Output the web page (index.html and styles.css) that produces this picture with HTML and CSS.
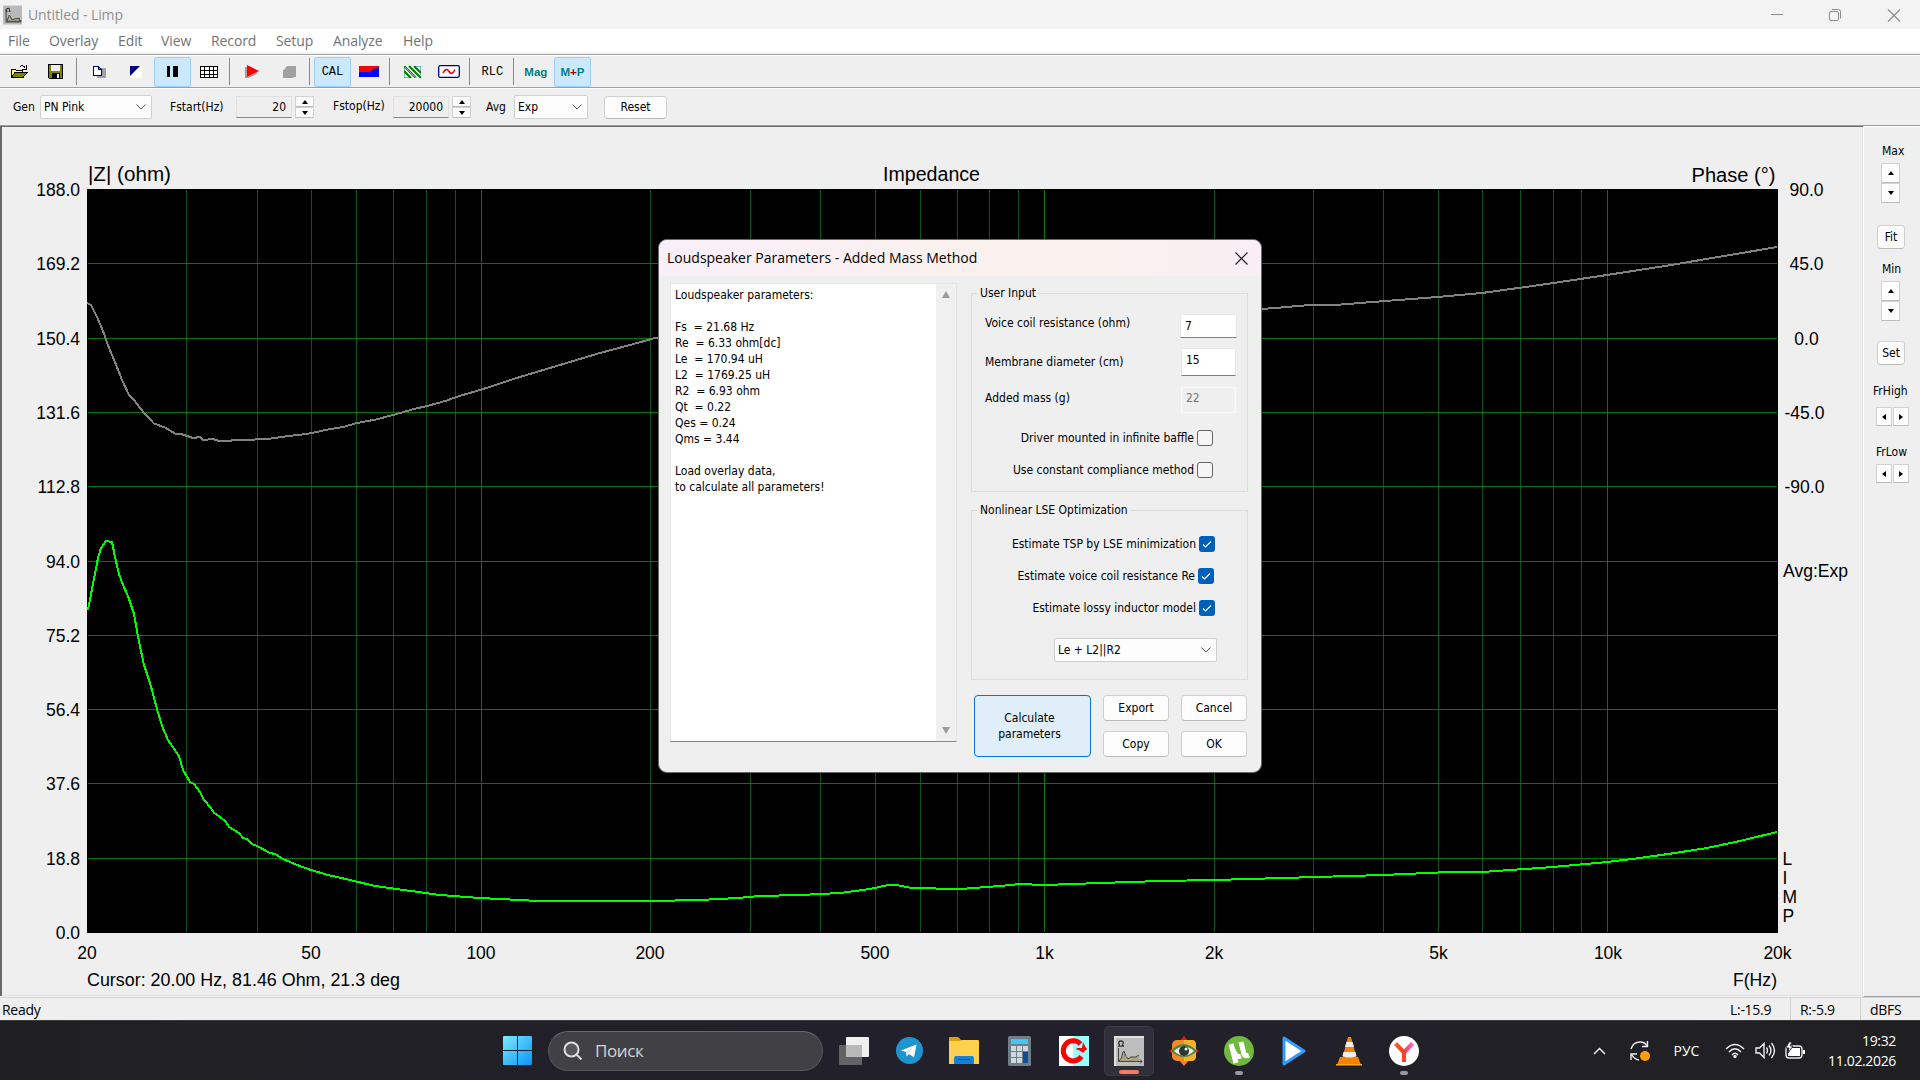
FILE: index.html
```html
<!DOCTYPE html>
<html lang="en">
<head>
<meta charset="utf-8">
<title>Untitled - Limp</title>
<link rel="stylesheet" href="styles.css">
</head>
<body>
<div class="desktop">
  <header class="titlebar">
    <svg class="app-icon" width="19" height="20" viewBox="0 0 30 30"><rect width="30" height="30" fill="#b9b9b9"/><path d="M5 5v21h23M28 26v-3" stroke="#555" fill="none" stroke-width="2"/><path d="M6 25l4-10 4 7 12-2v5z" fill="#aaa58e" stroke="#444" stroke-width="1.5"/><path d="M4 9h2c-2-6 6-6 4 0h2" fill="none" stroke="#333" stroke-width="1.6"/></svg>
    <span class="title-text">Untitled - Limp</span>
    <svg class="win-controls" width="134" height="14" viewBox="0 0 134 14" fill="none" stroke="#8b8b8b"><path d="M0 6.5h12"/><rect x="58.500" y="3.500" width="9" height="9" rx="1.500"/><path d="M61 1.500h6.500q2 0 2 2v7"/><path d="M117 1.500l12 12M129 1.500l-12 12" stroke-width="1.200"/></svg>
  </header>
  <nav class="menubar"><span>File</span><span>Overlay</span><span>Edit</span><span>View</span><span>Record</span><span>Setup</span><span>Analyze</span><span>Help</span></nav>
  <div class="toolbar">
    <span class="tool"><svg width="18" height="16" viewBox="0 0 18 16" shape-rendering="crispEdges"><path d="M1 13V5h4l1 1h6v3" fill="#ff6" stroke="#000"/><path d="M1.500 13.500L5 8.500h12l-4 5z" fill="#808000" stroke="#000"/><path d="M10 3q3-3 5 1M16 1v4h-4" fill="none" stroke="#000"/></svg></span>
    <span class="tool"><svg width="15" height="15" viewBox="0 0 15 15" shape-rendering="crispEdges"><path d="M.500.500h14v14h-13l-1-1z" fill="#808000" stroke="#000"/><path d="M3 1h9v6H3z" fill="#efefef"/><path d="M4 9h8v5H4z" fill="#000"/><path d="M9 10h2v4H9z" fill="#efefef"/></svg></span>
    <i class="sep"></i>
    <span class="tool"><svg width="15" height="14" viewBox="0 0 15 14" shape-rendering="crispEdges"><path d="M7 3h7v10H5v-2h2z" fill="#a0a0a0"/><path d="M1.500 1.500h5l3 3v6h-8zM6.500 1.500v3h3" fill="#fff" stroke="#000080" stroke-width="1.300"/></svg></span>
    <span class="tool"><svg width="12" height="12" viewBox="0 0 12 12"><path d="M0 0h12v12H0z" fill="#fff"/><path d="M0 0h10L0 10z" fill="#000080"/></svg></span>
    <span class="tool on"><svg width="11" height="11" viewBox="0 0 11 11"><path d="M0 0h3v11H0zM6 0h5v11H6z"/></svg></span>
    <span class="tool"><svg width="18" height="12" viewBox="0 0 18 12" fill="none" stroke="#000" shape-rendering="crispEdges"><path fill="#fff" d="M.500.500h17v11H.500z"/><path d="M0 4.500h18M0 8.500h18M4.500 0v12M9.500 0v12M13.500 0v12"/></svg></span>
    <i class="sep"></i>
    <span class="tool"><svg width="15" height="13" viewBox="0 0 15 13"><path d="M0 2h2v10l10-5v2L3 13H0z" fill="#a0a0a0"/><path d="M2 0l12 6L2 12z" fill="#f00"/></svg></span>
    <span class="tool"><svg width="13" height="12" viewBox="0 0 13 12"><path d="M4 0h9v11h-2l-1 1H0V4h1z" fill="#a0a0a0"/></svg></span>
    <i class="sep"></i>
    <span class="tool on pix">CAL</span>
    <span class="tool"><svg width="20" height="11" viewBox="0 0 20 11"><path d="M0 0h20v11H0z" fill="#00f"/><path d="M0 0h20v1l-7 3-2 2H0z" fill="#f00"/></svg></span>
    <i class="sep"></i>
    <span class="tool"><svg width="17" height="12" viewBox="0 0 17 12"><path d="M0 0h17v12H0z" fill="#fff"/><path d="M0 0v12h7M10 0h7v9" stroke="#008080" fill="none"/><path d="M0 0l12 12M5 0l12 12M0 5l7 7M10 0l7 7" stroke="#008000" stroke-width="2.200"/><path d="M1 1l11 11" stroke="#a0a0a0"/></svg></span>
    <span class="tool"><svg width="22" height="13" viewBox="0 0 22 13" fill="none"><rect x=".700" y=".700" width="20.600" height="11.600" rx="1.500" fill="#fff" stroke="#000080" stroke-width="1.300"/><path d="M5 8q3-6 6-1.500t6-2" stroke="#f00" stroke-width="1.600"/></svg></span>
    <i class="sep"></i>
    <span class="tool pix">RLC</span>
    <i class="sep"></i>
    <span class="tool mag">Mag</span>
    <span class="tool on mag">M<b>+</b>P</span>
  </div>
  <div class="genbar">
    <label class="w-gen">Gen</label>
    <span class="combo w-src">PN Pink<svg width="10" height="6" viewBox="0 0 10 6"><path d="M.500.500L5 5 9.500.500" fill="none" stroke="#555"/></svg></span>
    <label class="w-fstart">Fstart(Hz)</label>
    <span class="num">20</span><span class="spin"><i class="up"></i><i class="down"></i></span>
    <label class="w-fstop">Fstop(Hz)</label>
    <span class="num">20000</span><span class="spin"><i class="up"></i><i class="down"></i></span>
    <label class="w-avg">Avg</label>
    <span class="combo w-exp">Exp<svg width="10" height="6" viewBox="0 0 10 6"><path d="M.500.500L5 5 9.500.500" fill="none" stroke="#555"/></svg></span>
    <span class="btn w-reset">Reset</span>
  </div>
  <main class="work">
    <svg class="chart" width="1863" height="870" viewBox="0 127 1863 870">
      <rect x="87" y="190" width="1691" height="744" fill="#000"/>
      <g fill="none" stroke-width="1" shape-rendering="crispEdges">
        <path stroke="#0b5320" d="M186.500 191v742M257.500 191v742M311.500 191v742M356.500 191v742M393.500 191v742M426.500 191v742M455.500 191v742M650.500 191v742M750.500 191v742M820.500 191v742M875.500 191v742M920.500 191v742M957.500 191v742M989.500 191v742M1018.500 191v742M1214.500 191v742M1313.500 191v742M1383.500 191v742M1438.500 191v742M1482.500 191v742M1520.500 191v742M1553.500 191v742M1581.500 191v742"/>
        <path stroke="#007a00" d="M481.500 191v742M1044.500 191v742M1607.500 191v742M88 264.500h1689M88 339.500h1689M88 413.500h1689M88 487.500h1689M88 562.500h1689M88 636.500h1689M88 710.500h1689M88 784.500h1689M88 859.500h1689"/>
      </g>
      <g fill="none" stroke-width="2" shape-rendering="crispEdges">
        <polyline stroke="#828282" points="87,304 91,306 97,318 103,332 109,349 115,363 122,381 129,396 134,401 144,414 154,424.5 165,428.5 175,434.5 181,435 193,439 200,438 203,441 213,440 219,442 229,442 234,441 250,441 260,440 268,440 285,437.5 302,435.5 312,434 328,430.5 343,428 357,424 376,420.5 393,416 414,410 427,407 447,401.5 456,398 480,391 520,378 560,366 600,354 630,346 655,339 700,332 1200,313 1262,310 1275,309 1310,306 1335,306 1385,302 1438,298 1482,294 1540,286 1607,276 1665,267 1730,256 1777,248"/>
        <polyline stroke="#00ff00" points="88,611 92,590 98,559 101,549 106,542 112,543 115,558 119,575 123,586 128,597 134,615 139,643 144,666 150,684 157,710 162,727 168,741 179,757 183,771 190,783 194,785 200,793 204,801 211,809 214,814 219,817 226,823 229,828 239,834 243,839 247,840 252,845 257,847 270,854 275,855 283,860 297,866 311,871 328,876 350,881 375,887 400,890.5 440,896 480,899 500,900 539,902 650,902 700,901 738,899 759,897 800,896 840,894 870,890 888,886 896,886 912,889 960,890 1000,887 1020,885 1044,886 1100,884 1160,882 1214,881 1316,878 1383,876 1438,873.5 1482,873 1553,868 1607,863 1640,859 1675,854 1707,849 1740,842 1777,833"/>
      </g>
      <g class="head">
        <text x="88" y="181.500" textLength="83" lengthAdjust="spacingAndGlyphs">|Z| (ohm)</text>
        <text x="883" y="181.500" textLength="97" lengthAdjust="spacingAndGlyphs">Impedance</text>
        <text x="1691.500" y="182.500" textLength="84" lengthAdjust="spacingAndGlyphs">Phase (°)</text>
      </g>
      <g class="axis end">
        <text x="80" y="197">188.0</text><text x="80" y="271">169.2</text><text x="80" y="346">150.4</text><text x="80" y="420">131.6</text><text x="80" y="494">112.8</text><text x="80" y="569">94.0</text><text x="80" y="643">75.2</text><text x="80" y="717">56.4</text><text x="80" y="791">37.6</text><text x="80" y="866">18.8</text><text x="80" y="940">0.0</text>
      </g>
      <g class="axis mid">
        <text x="1806.500" y="197">90.0</text><text x="1806.500" y="271">45.0</text><text x="1806.500" y="346">0.0</text><text x="1804.500" y="420">-45.0</text><text x="1804.500" y="494">-90.0</text>
        <text x="87" y="960">20</text><text x="311" y="960">50</text><text x="481" y="960">100</text><text x="650" y="960">200</text><text x="875" y="960">500</text><text x="1044.500" y="960">1k</text><text x="1214" y="960">2k</text><text x="1438.500" y="960">5k</text><text x="1608" y="960">10k</text><text x="1777.500" y="960">20k</text>
      </g>
      <g class="axis">
        <text x="87" y="987" textLength="313" lengthAdjust="spacingAndGlyphs">Cursor: 20.00 Hz, 81.46 Ohm, 21.3 deg</text>
        <text x="1733" y="987" textLength="44" lengthAdjust="spacingAndGlyphs">F(Hz)</text>
        <text x="1783" y="578" textLength="65" lengthAdjust="spacingAndGlyphs">Avg:Exp</text>
        <text x="1782.500" y="866">L</text><text x="1782.500" y="885">I</text><text x="1782.500" y="904">M</text><text x="1782.500" y="923">P</text>
      </g>
    </svg>
    <aside class="side">
      <label class="s-max">Max</label>
      <span class="vspin"><i class="up"></i><i class="down"></i></span>
      <span class="btn s-fit">Fit</span>
      <label class="s-min">Min</label>
      <span class="vspin"><i class="up"></i><i class="down"></i></span>
      <span class="btn s-set">Set</span>
      <label class="s-fh">FrHigh</label>
      <span class="hspin"><i class="left"></i><i class="right"></i></span>
      <label class="s-fl">FrLow</label>
      <span class="hspin"><i class="left"></i><i class="right"></i></span>
    </aside>
  </main>
  <footer class="status"><span class="ready">Ready</span><span class="lev">L:-15.9</span><span class="rev">R:-5.9</span><span class="dbfs">dBFS</span></footer>

  <div class="taskbar">
    <svg class="start" width="29" height="29" viewBox="0 0 29 29"><defs><linearGradient id="win" x1="0" y1="0" x2="1" y2="1"><stop offset="0" stop-color="#7deaff"/><stop offset="1" stop-color="#0a93f8"/></linearGradient></defs><path fill="url(#win)" d="M1 0h13v14H0V1q0-1 1-1zM15 0h13q1 0 1 1v13H15zM0 15h14v14H1q-1 0-1-1zM15 15h14v13q0 1-1 1H15z"/></svg>
    <div class="search"><svg width="20" height="20" viewBox="0 0 20 20" fill="#58575c" stroke="#ddd" stroke-width="2"><circle cx="8.500" cy="8.500" r="7"/><path d="M13.500 13.500l5 5"/></svg><span>Поиск</span></div>
    <div class="apps">
      <span class="app"><svg width="30" height="28" viewBox="0 0 30 28"><rect x="0" y="8" width="23" height="20" rx="1" fill="#636363"/><rect x="7" y="0" width="23" height="20" rx="1" fill="#f0f0f0"/><path d="M7 8h16v12H7z" fill="#b9b9b9"/></svg></span>
      <span class="app"><svg width="27" height="27" viewBox="0 0 27 27"><circle cx="13.500" cy="13.500" r="13.500" fill="#1f95d0"/><path d="M5 13.500L20.500 7.500 18 20.500l-5-3.500-2.500 2.500-.500-4.500z" fill="#fff"/><path d="M10 15l7-5-5.500 6.500z" fill="#bcdcee"/></svg></span>
      <span class="app"><svg width="30" height="27" viewBox="0 0 30 27"><path d="M0 1q0-1 1-1h8l4 4h15q1 0 1 1v8H0z" fill="#e0a008"/><path d="M0 4h10l3-1h16q1 0 1 1v23H0z" fill="#ffd04d"/><path d="M5 27v-6q0-2 2-2h16q2 0 2 2v6z" fill="#1482d6"/><path d="M9 22.500h12" stroke="#075293"/></svg></span>
      <span class="app"><svg width="23" height="30" viewBox="0 0 23 30"><rect width="23" height="30" rx="1.500" fill="#6f7f89"/><path d="M3 3h17v5H3z" fill="#45c4f5"/><path d="M3 10h5v5H3zM9 10h5v5H9zM15 10h5v5h-5zM3 16h5v5H3zM9 16h5v5H9zM3 22h5v5H3zM9 22h5v5H9z" fill="#d0d8dd"/><path d="M15 16h5v11h-5z" fill="#114e96"/></svg></span>
      <span class="app"><svg width="30" height="30" viewBox="0 0 30 30"><path d="M0 0h30v30H0z" fill="#fff"/><path d="M14 0h16v30H14z" fill="#98ffff"/><path d="M22.500 20.500A10 10 0 1 1 21.500 8" fill="none" stroke="#f00" stroke-width="5"/><path d="M16 14h12l-4-8-1 6z" fill="#f00"/><path d="M17 12h11l-4 5z" fill="#f00"/></svg></span>
      <span class="app active"><svg width="30" height="30" viewBox="0 0 30 30"><path d="M0 0h30v30H0z" fill="#e4e3da"/><path d="M2 2h28v28H2z" fill="#bdbdbd"/><path d="M4.500 12v13.500H28M26 23.500l2 2-2 2" stroke="#454545" fill="none"/><path d="M5 25q3-2 4-9l1-1q2 7 4 8 3-3 5-2t6-2v6z" fill="#aaa486"/><path d="M5 25q3-2 4-9l1-1q2 7 4 8 3-3 5-2t6-2" fill="none" stroke="#454545"/><path d="M4 10h2q-3-5 1-5t1 5h2" fill="none" stroke="#333" stroke-width="1.300"/></svg><i class="bar"></i></span>
      <span class="app"><svg width="30" height="30" viewBox="0 0 30 30"><path d="M15 0l5 6H10zM0 15l6-5v10zM30 15l-6-5v10z" fill="#c7221d"/><path d="M15 30l6-7H9z" fill="#ff7a35"/><rect x="3" y="4" width="24" height="21" rx="5" fill="#ef8a25"/><path d="M15 4h8q4 0 4 5v11q0 5-4 5h-8z" fill="#f2b324"/><path d="M2 15q12-14 26 0-13 12-26 0z" fill="#508348"/><path d="M5 15q10-9 20 0-10 9-20 0z" fill="#f2eee4"/><circle cx="15" cy="15" r="5" fill="#27382f"/><circle cx="17" cy="13" r="1.500" fill="#fff"/></svg></span>
      <span class="app"><svg width="30" height="30" viewBox="0 0 30 30"><circle cx="15" cy="15" r="15" fill="#70b83e"/><path d="M7 8l5 19M9 14q3 8 8 6M17 6l3 12q1 3 5 1" stroke="#fff" stroke-width="5" fill="none"/></svg><i class="dot"></i></span>
      <span class="app"><svg width="24" height="30" viewBox="0 0 24 30"><path d="M2 2l20 13L2 28z" fill="#fff" stroke="#2f9cfb" stroke-width="3" stroke-linejoin="round"/></svg></span>
      <span class="app"><svg width="26" height="30" viewBox="0 0 26 30"><path d="M4 21h18l3 8H1z" fill="#f58206"/><path d="M12 1h3l6 22q-8 4-15 0z" fill="#f58206"/><path d="M10.500 6h6l1.500 5H9zM7.500 16h12l1 4q-7 3-14 0z" fill="#eee"/><path d="M0 28h26v1.500H0z" fill="#ffa62b"/></svg></span>
      <span class="app"><svg width="30" height="30" viewBox="0 0 30 30"><defs><linearGradient id="ya" x1="0" y1="0" x2="1" y2="0"><stop offset="0" stop-color="#ff5a22"/><stop offset=".500" stop-color="#f5402c"/><stop offset="1" stop-color="#ff5fe0"/></linearGradient></defs><circle cx="15" cy="15" r="15" fill="#fff"/><path d="M6.500 7.500l8.500 9 8.500-9M15 16v10" fill="none" stroke="url(#ya)" stroke-width="4.200"/></svg><i class="dot"></i></span>
    </div>
    <div class="tray">
      <svg class="t-chev" width="13" height="8" viewBox="0 0 13 8"><path d="M1 7l5.500-5.500L12 7" fill="none" stroke="#eee" stroke-width="1.500"/></svg>
      <svg class="t-sync" width="22" height="22" viewBox="0 0 22 22"><path d="M2 9q2-7 9-7 5 0 7 4M18.500 1v5.500H13M19 13M2 20v-6h6M3 15q2 4 7 5" fill="none" stroke="#eee" stroke-width="1.400"/><circle cx="16" cy="16" r="5" fill="#ff9d0a"/></svg>
      <span class="t-lang">РУС</span>
      <svg class="t-wifi" width="20" height="16" viewBox="0 0 20 16" fill="none" stroke="#eee" stroke-width="1.500"><path d="M1 6q9-9 18 0M4 9q6-6.500 12 0M7 12q3-3.500 6 0"/><circle cx="10" cy="13.500" r="1" fill="#eee"/></svg>
      <svg class="t-snd" width="21" height="17" viewBox="0 0 21 17" fill="none" stroke="#eee" stroke-width="1.400"><path d="M1 6h3.500L9 1.500v14L4.500 11H1zM11.500 5.500q2 3 0 6M14 3.500q4 5 0 10M16.500 1q6 7.500 0 15"/></svg>
      <svg class="t-bat" width="20" height="17" viewBox="0 0 20 17"><rect x="1" y="4" width="16" height="12" rx="3" fill="none" stroke="#eee" stroke-width="1.400"/><path d="M7 6h8v8H3v-3zM18 8h2v4h-2z" fill="#fff"/><path d="M4 0L1 6h3l-1 5 5-7H5l2-4z" fill="#fff" stroke="#202022" stroke-width=".800"/></svg>
      <div class="clock"><span class="time">19:32</span><span class="date">11.02.2026</span></div>
    </div>
  </div>

  <section class="dialog">
    <header class="dlg-title"><span>Loudspeaker Parameters - Added Mass Method</span><svg width="13" height="13" viewBox="0 0 13 13"><path d="M.500.500l12 12M12.500.500l-12 12" stroke="#222" stroke-width="1.200"/></svg></header>
    <div class="dlg-body">
      <div class="report"><pre>Loudspeaker parameters:

Fs  = 21.68 Hz
Re  = 6.33 ohm[dc]
Le  = 170.94 uH
L2  = 1769.25 uH
R2  = 6.93 ohm
Qt  = 0.22
Qes = 0.24
Qms = 3.44

Load overlay data,
to calculate all parameters!</pre><div class="scroll"><i></i><i class="flip"></i></div></div>
      <div class="controls">
        <div class="group g1"><span class="legend">User Input</span>
          <div class="row r1"><span>Voice coil resistance (ohm)</span><span class="field f1">7</span></div>
          <div class="row r2"><span>Membrane diameter (cm)</span><span class="field f2">15</span></div>
          <div class="row r3"><span>Added mass (g)</span><span class="field f3">22</span></div>
          <div class="check c1"><span>Driver mounted in infinite baffle</span><i class="box"></i></div>
          <div class="check c2"><span>Use constant compliance method</span><i class="box"></i></div>
        </div>
        <div class="group g2"><span class="legend">Nonlinear LSE Optimization</span>
          <div class="check c3"><span>Estimate TSP by LSE minimization</span><i class="box ticked"><svg width="16" height="16" viewBox="0 0 16 16"><path d="M4 8.500l2.500 2.500L12 5.500" fill="none" stroke="#fff" stroke-width="1.100"/></svg></i></div>
          <div class="check c4"><span>Estimate voice coil resistance Re</span><i class="box ticked"><svg width="16" height="16" viewBox="0 0 16 16"><path d="M4 8.500l2.500 2.500L12 5.500" fill="none" stroke="#fff" stroke-width="1.100"/></svg></i></div>
          <div class="check c5"><span>Estimate lossy inductor model</span><i class="box ticked"><svg width="16" height="16" viewBox="0 0 16 16"><path d="M4 8.500l2.500 2.500L12 5.500" fill="none" stroke="#fff" stroke-width="1.100"/></svg></i></div>
          <span class="combo model">Le + L2||R2<svg width="10" height="6" viewBox="0 0 10 6"><path d="M.500.500L5 5 9.500.500" fill="none" stroke="#555"/></svg></span>
        </div>
        <div class="buttons">
          <span class="btn calc">Calculate<br>parameters</span>
          <span class="btn">Export</span><span class="btn">Cancel</span>
          <span class="btn">Copy</span><span class="btn">OK</span>
        </div>
      </div>
    </div>
  </section>
</div>
</body>
</html>
```
FILE: styles.css
```css
* { box-sizing: border-box; }
body { margin: 0; background: #efefef; overflow: hidden; }
.desktop {
  position: relative; width: 1920px; height: 1080px; display: flex; flex-direction: column;
  background: #efefef; color: #000; white-space: nowrap;
  font: 12px/16px "DejaVu Sans Condensed", "DejaVu Sans", sans-serif; font-stretch: condensed;
}
svg { display: block; flex: none; }
i { display: block; }

.titlebar { height: 29px; background: #f3f3f3; display: flex; align-items: center; padding-left: 3px; color: #8f8f8f; font: 14px/20px "Open Sans", "Noto Sans", sans-serif; }
.title-text { margin-left: 6px; letter-spacing: -0.1px; flex: 1; }
.win-controls { margin-right: 15px; }
.menubar { height: 25px; background: #fff; border-bottom: 2px solid #f3f3f3; display: grid; grid-template-columns: 41px 69px 43px 50px 65px 57px 70px 60px; padding-left: 8px; color: #727272; font: 14px/24px "Open Sans", "Noto Sans", sans-serif; letter-spacing: -0.1px; }
.toolbar { height: 33px; border-top: 1px solid #a0a0a0; box-shadow: inset 0 1px #fff; display: flex; align-items: center; padding: 1px 0 0 1px; }
.tool { width: 36.6px; height: 30px; display: flex; align-items: center; justify-content: center; }
.tool.on { background: #cce8ff; border: 1px solid #99d1ff; border-radius: 2px; }
.sep { width: 1px; height: 27px; background: #8a8a8a; margin: 0 3.8px 0 2px; }
.pix { font: 12px/14px "Liberation Mono", monospace; letter-spacing: 0; }
.mag { font-family: "Liberation Sans", sans-serif; font-weight: bold; font-size: 11.5px; color: #008080; }
.mag b { color: #a00000; }

.genbar { height: 38px; border-top: 1px solid #a0a0a0; box-shadow: inset 0 1px #fff; display: flex; align-items: center; padding: 1px 0 0 13px; }
.w-gen { width: 27px; }
.combo { height: 24px; background: #fdfdfd; border: 1px solid #d0d0d0; border-radius: 2px; display: flex; align-items: center; justify-content: space-between; padding: 0 5px 0 3px; }
.w-src { width: 112px; }
.w-fstart { width: 66px; margin-left: 18px; }
.num { width: 56px; height: 22px; border: 1px solid #e2e2e2; border-bottom-color: #868686; text-align: right; padding: 2px 5px 0 0; font-size: 12px; }
.spin { width: 19px; height: 22px; margin-left: 3px; }
.spin i, .vspin i { display: flex; height: 50%; background: #fdfdfd; border: 1px solid #d2d2d2; border-bottom-color: #bcbcbc; align-items: center; justify-content: center; }
.up::before, .down::before { content: ""; border: 3.5px solid transparent; border-top: 0; border-bottom: 4px solid #000; }
.down::before { border-bottom: 0; border-top: 4px solid #000; }
.w-fstop { width: 60px; margin: -2px 0 0 19px; }
.w-avg { width: 28px; margin-left: 15px; }
.w-exp { width: 74px; }
.btn { background: #fdfdfd; border: 1px solid #d0d0d0; border-bottom-color: #bbb; border-radius: 4px; display: flex; align-items: center; justify-content: center; text-align: center; }
.w-reset { width: 63px; height: 23px; margin-left: 16px; }

.work { height: 872px; display: flex; border-top: 1px solid #a0a0a0; }
.chart { border-left: 0; box-shadow: inset 2px 1px #696969, inset -1px -1px #e3e3e3; }
.chart text { font-family: "Liberation Sans", Arial, sans-serif; font-size: 17.5px; }
.chart .head text { font-size: 20px; }
.end { text-anchor: end; }
.mid { text-anchor: middle; }
.side { flex: 1; border-left: 1px solid #fff; border-top: 1px solid #fff; border-bottom: 1px solid #a0a0a0; display: flex; flex-direction: column; padding-top: 16px; }
.side label { height: 16px; }
.s-max, .s-min { margin-left: 18px; }
.vspin { width: 19px; height: 40px; margin: 4px 0 0 17px; }
.side .s-fit { width: 28px; height: 24px; margin: 22px 0 0 13px; }
.side .s-min { margin-top: 12px; }
.side .s-set { width: 28px; height: 24px; margin: 20px 0 0 13px; }
.s-fh { margin: 18px 0 0 9px; }
.s-fl { margin: 18px 0 0 12px; }
.hspin { display: flex; gap: 1px; width: 33px; height: 19px; margin: 8px 0 0 12px; }
.s-fl + .hspin { margin-top: 4px; }
.hspin i { flex: 1; background: #fdfdfd; border: 1px solid #d2d2d2; border-bottom-color: #bbb; display: flex; align-items: center; justify-content: center; }
.left::before, .right::before { content: ""; border: 3.5px solid transparent; border-left: 0; border-right: 4px solid #000; }
.right::before { border-right: 0; border-left: 4px solid #000; }

.status { height: 23px; border-top: 1px solid #d5d5d5; display: flex; font: 14px/24px "Open Sans", "Noto Sans", sans-serif; letter-spacing: -0.3px; padding-left: 2px; }
.ready { width: 1728px; }
.lev { width: 61px; border-right: 1px solid #d5d5d5; }
.rev { width: 70px; padding-left: 9px; border-right: 1px solid #d5d5d5; }
.dbfs { padding-left: 9px; }

.taskbar { height: 60px; background: linear-gradient(90deg, #202023, #22202b 45%, #22202a 65%, #202022); border-top: 1px solid #3a3a3c; display: flex; align-items: center; padding-left: 503px; color: #fff; }
.search { width: 275px; height: 40px; margin-left: 16px; border-radius: 20px; background: #414044; border: 1px solid #555459; border-top-color: #69686d; display: flex; align-items: center; padding-left: 14px; gap: 12px; font: 17px/24px "Open Sans", "Noto Sans", sans-serif; color: #d5d5d6; letter-spacing: -0.4px; }
.apps { display: grid; grid-template-columns: repeat(11, 55px); margin-left: 3.500px; }
.app { position: relative; height: 50px; display: flex; align-items: center; justify-content: center; }
.active { width: 50px; margin-left: 2.500px; background: #312f39; border: 1px solid #3b3944; border-radius: 5px; }
.bar, .dot { position: absolute; left: 50%; bottom: 1px; width: 20px; height: 4px; margin-left: -10px; border-radius: 2px; background: #f17b63; }
.dot { width: 8px; margin-left: -4px; background: #98979c; }
.tray { flex: 1; display: flex; align-items: center; font: 14px/20px "Open Sans", "Noto Sans", sans-serif; }
.t-chev { margin-left: 161px; }
.t-sync { margin-left: 23px; }
.t-lang { margin-left: 23px; width: 51px; }
.t-snd { margin-left: 10px; }
.t-bat { margin-left: 9px; }
.clock { flex: 1; display: flex; flex-direction: column; align-items: flex-end; padding-right: 24px; letter-spacing: -0.35px; }

.dialog { position: absolute; left: 658px; top: 239px; width: 604px; height: 534px; border-radius: 9px; background: #efefef; border: 1px solid #6a6a6a; overflow: hidden; }
.dlg-title { height: 36px; background: linear-gradient(90deg, #f9eff9, #faf0ee 45%, #faf0ee 75%, #f8eef4); display: flex; align-items: center; justify-content: space-between; padding: 0 13px 0 8px; font: 14px/20px "Open Sans", "Noto Sans", sans-serif; }
.dlg-body { display: flex; padding: 7px 0 0 11px; }
.report { width: 287px; height: 459px; background: #fff; border: 1px solid #e5e5e5; border-bottom-color: #868686; display: flex; justify-content: space-between; }
.report pre { margin: 3px 0 0 4px; font: inherit; font-stretch: condensed; line-height: 16px; }
.scroll { width: 20px; background: #f0f0f0; display: flex; flex-direction: column; justify-content: space-between; align-items: center; padding: 7px 0; }
.scroll i { border: 4.5px solid transparent; border-top: 0; border-bottom: 7px solid #9c9c9c; }
.scroll .flip { transform: rotate(180deg); }
.controls { width: 277px; margin-left: 14px; }
.group { border: 1px solid #dcdcdc; display: flex; flex-direction: column; }
.legend { align-self: flex-start; background: #efefef; padding: 0 2px; margin: -9px 0 0 6px; height: 16px; }
.g1 { height: 199px; margin-top: 10px; }
.row { display: flex; justify-content: space-between; align-items: flex-start; padding-left: 13px; }
.r1 { margin-top: 13px; padding-right: 10px; }
.r1 > span:first-child { margin-top: 1px; }
.r2 { margin-top: 10px; padding-right: 11px; }
.r2 > span:first-child { margin-top: 6px; }
.r3 { margin-top: 11px; padding-right: 11px; }
.r3 > span:first-child { margin-top: 3px; }
.field { background: #fff; border: 1px solid #e8e8e8; border-bottom-color: #808080; padding-left: 4px; }
.f1 { width: 57px; height: 24px; padding-top: 3px; }
.f2 { width: 55px; height: 28px; padding-top: 3px; }
.f3 { width: 55px; height: 26px; padding-top: 2px; background: #efefef; border: 1px solid #f8f8f8; color: #777; }
.check { display: flex; justify-content: flex-end; align-items: center; gap: 3px; height: 16px; padding-right: 34px; }
.box { width: 16px; height: 16px; border: 1px solid #666; border-radius: 3px; background: #f5f5f5; }
.ticked { background: #005fb8; border: 0; }
.c1 { margin-top: 17px; }
.c2 { margin-top: 16px; }
.g2 { height: 170px; margin-top: 18px; }
.c3 { margin-top: 18px; padding-right: 32px; }
.c4 { margin-top: 16px; padding-right: 33px; }
.c5 { margin-top: 16px; padding-right: 32px; }
.model { width: 163px; margin: 22px 0 0 82px; }
.buttons { display: grid; grid-template-columns: 117px 66px 66px; grid-template-rows: 26px 26px; column-gap: 12px; row-gap: 10px; margin: 15px 0 0 3px; }
.calc { grid-row: 1 / 3; background: #e0eef9; border-color: #0078d4; padding-right: 6px; }
```
